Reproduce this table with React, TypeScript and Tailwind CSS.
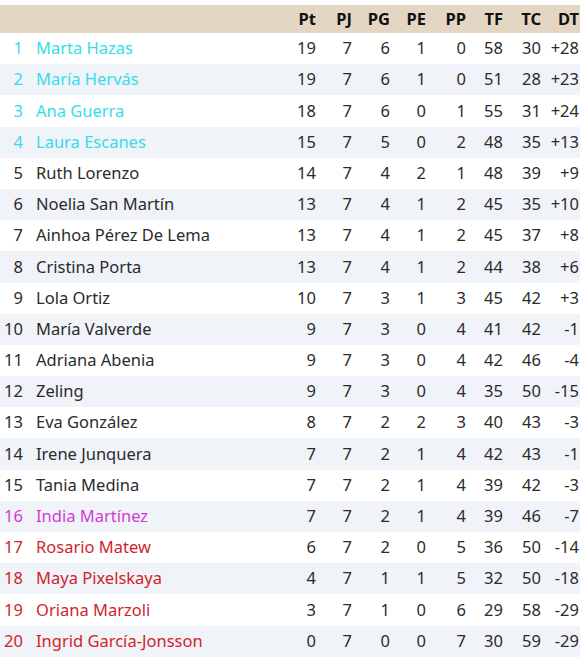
const rows: [number, string, number, number, number, number, number, number, number, string][] = [
  [1, 'Marta Hazas', 19, 7, 6, 1, 0, 58, 30, '+28'],
  [2, 'María Hervás', 19, 7, 6, 1, 0, 51, 28, '+23'],
  [3, 'Ana Guerra', 18, 7, 6, 0, 1, 55, 31, '+24'],
  [4, 'Laura Escanes', 15, 7, 5, 0, 2, 48, 35, '+13'],
  [5, 'Ruth Lorenzo', 14, 7, 4, 2, 1, 48, 39, '+9'],
  [6, 'Noelia San Martín', 13, 7, 4, 1, 2, 45, 35, '+10'],
  [7, 'Ainhoa Pérez De Lema', 13, 7, 4, 1, 2, 45, 37, '+8'],
  [8, 'Cristina Porta', 13, 7, 4, 1, 2, 44, 38, '+6'],
  [9, 'Lola Ortiz', 10, 7, 3, 1, 3, 45, 42, '+3'],
  [10, 'María Valverde', 9, 7, 3, 0, 4, 41, 42, '-1'],
  [11, 'Adriana Abenia', 9, 7, 3, 0, 4, 42, 46, '-4'],
  [12, 'Zeling', 9, 7, 3, 0, 4, 35, 50, '-15'],
  [13, 'Eva González', 8, 7, 2, 2, 3, 40, 43, '-3'],
  [14, 'Irene Junquera', 7, 7, 2, 1, 4, 42, 43, '-1'],
  [15, 'Tania Medina', 7, 7, 2, 1, 4, 39, 42, '-3'],
  [16, 'India Martínez', 7, 7, 2, 1, 4, 39, 46, '-7'],
  [17, 'Rosario Matew', 6, 7, 2, 0, 5, 36, 50, '-14'],
  [18, 'Maya Pixelskaya', 4, 7, 1, 1, 5, 32, 50, '-18'],
  [19, 'Oriana Marzoli', 3, 7, 1, 0, 6, 29, 58, '-29'],
  [20, 'Ingrid García-Jonsson', 0, 7, 0, 0, 7, 30, 59, '-29'],
]

const headers = ['Pt', 'PJ', 'PG', 'PE', 'PP', 'TF', 'TC', 'DT']

function posColor(pos: number) {
  if (pos <= 4) return 'text-[#34dde9]'
  if (pos === 16) return 'text-[#d43ad6]'
  if (pos >= 17) return 'text-[#d21f2b]'
  return 'text-[#2b2b2b]'
}

const grid =
  'grid grid-cols-[23px_1fr_40px_36px_38px_36px_40px_37px_38px_38px] items-center pr-[1px]'

export default function App() {
  return (
    <div className="w-[587px] h-[659px] bg-white pt-[5px] font-['Segoe_UI','Noto_Sans',sans-serif] text-[16.5px] overflow-hidden">
      <div className="w-[580px]">
        {/* Header */}
        <div className={`${grid} h-[28px] bg-[#e3d6c3] font-bold text-[#111]`}>
          <span />
          <span />
          {headers.map((h) => (
            <span key={h} className="text-right">
              {h}
            </span>
          ))}
        </div>

        {/* Rows */}
        {rows.map((r, i) => {
          const color = posColor(r[0])
          return (
            <div
              key={r[0]}
              className={`${grid} h-[31.2px] ${i % 2 === 1 ? 'bg-[#f0f3f8]' : 'bg-white'}`}
            >
              <span className={`text-right ${color}`}>{r[0]}</span>
              <span className={`pl-[13px] whitespace-nowrap ${color}`}>{r[1]}</span>
              {r.slice(2).map((v, j) => (
                <span key={j} className="text-right text-[#2b2b2b]">
                  {v}
                </span>
              ))}
            </div>
          )
        })}
      </div>
    </div>
  )
}
